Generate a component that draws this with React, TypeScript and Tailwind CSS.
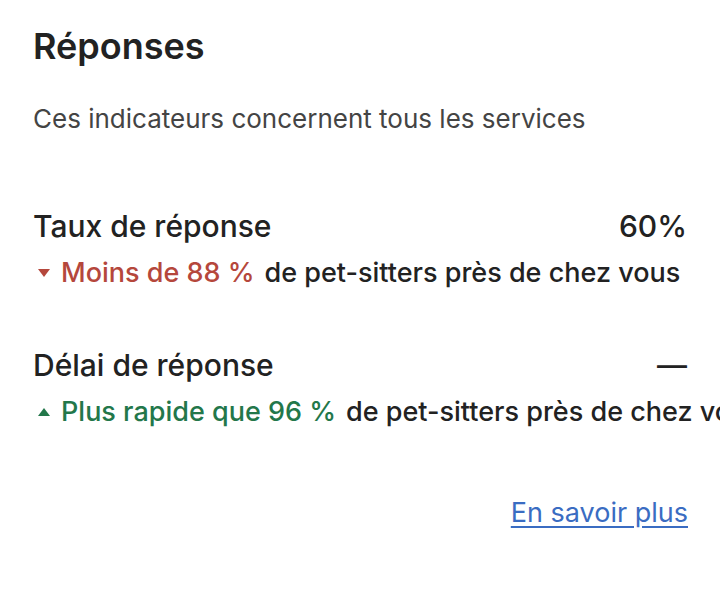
import React from "react";

const Metric = ({
  title,
  value,
  up,
  highlight,
}: {
  title: string;
  value: string;
  up: boolean;
  highlight: string;
}) => {
  const color = up ? "text-[#23774a]" : "text-[#b5473c]";
  return (
    <div>
      <div className="flex items-center justify-between text-[30px] leading-[36px] font-medium text-[#222]">
        <span>{title}</span>
        <span>{value}</span>
      </div>
      <div className="mt-[13px] flex items-center whitespace-nowrap text-[27px] leading-[32px] font-medium text-[#222]">
        <span className={`ml-[5px] mr-[11px] ${color}`}>
          {up ? (
            <svg width="12" height="8" viewBox="0 0 12 8" className="fill-current">
              <path d="M6 0 L12 8 L0 8 Z" />
            </svg>
          ) : (
            <svg width="12" height="8" viewBox="0 0 12 8" className="fill-current">
              <path d="M0 0 L12 0 L6 8 Z" />
            </svg>
          )}
        </span>
        <span className={color}>{highlight}</span>
        <span className="ml-[10px]">de pet-sitters près de chez vous</span>
      </div>
    </div>
  );
};

export default function App() {
  return (
    <div
      className="w-[720px] h-[611px] overflow-hidden bg-white pl-[33px] pr-[33px] pt-[22px]"
      style={{ fontFamily: "Inter, sans-serif" }}
    >
      <h1 className="text-[36px] leading-[48px] font-semibold text-[#222]">Réponses</h1>
      <p className="mt-[33px] text-[26px] leading-[32px] text-[#444]">
        Ces indicateurs concernent tous les services
      </p>
      <div className="mt-[73px] w-[654px]">
        <Metric title="Taux de réponse" value="60%" up={false} highlight="Moins de 88 %" />
      </div>
      <div className="mt-[58px] w-[654px]">
        <Metric title="Délai de réponse" value="—" up={true} highlight="Plus rapide que 96 %" />
      </div>
      <div className="mt-[69px] flex justify-end w-[655px]">
        <a href="#" className="text-[27px] leading-[32px] text-[#3a6cc2] underline underline-offset-[4px]">
          En savoir plus
        </a>
      </div>
    </div>
  );
}
